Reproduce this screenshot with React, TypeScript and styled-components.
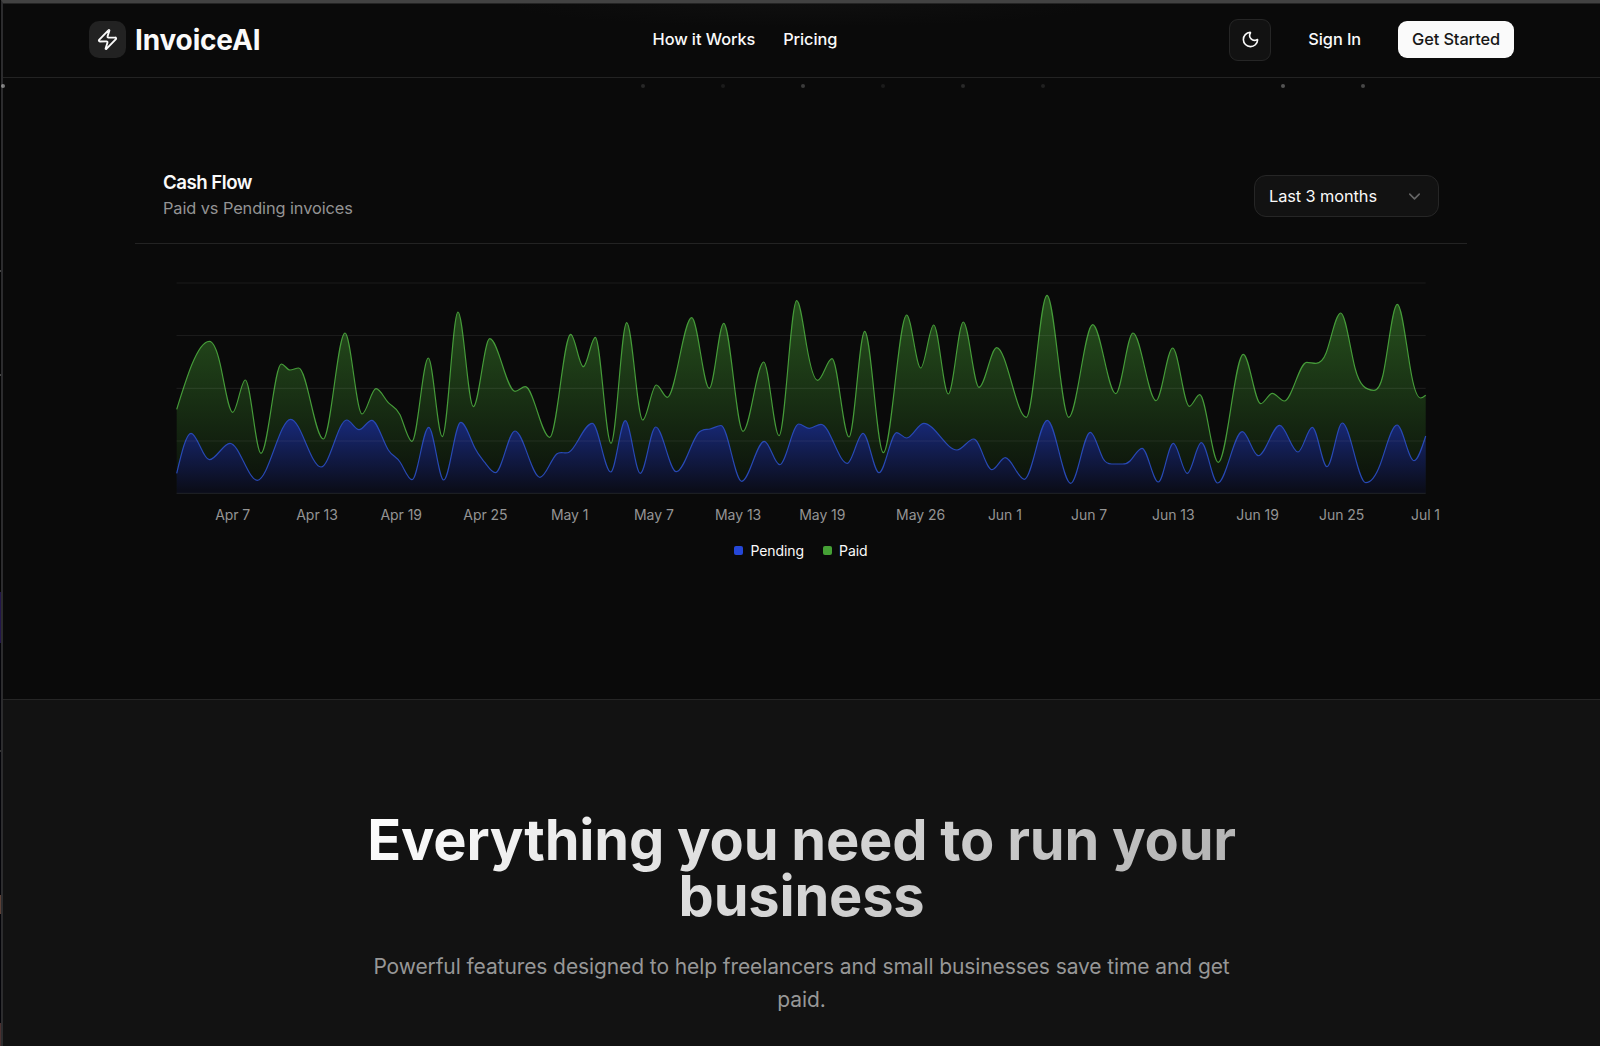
import React from "react";
import styled, { createGlobalStyle } from "styled-components";
import { Zap, Moon, ChevronDown } from "lucide-react";

const GlobalStyle = createGlobalStyle`
  *, *::before, *::after { box-sizing: border-box; }
  html, body { margin: 0; padding: 0; background: #0a0a0a; overflow: hidden; }
  body {
    font-family: Inter, "Noto Sans", sans-serif;
    color: #fafafa;
    -webkit-font-smoothing: antialiased;
  }
`;

const Window = styled.div`
  width: 1600px;
  height: 1046px;
  overflow: hidden;
  display: grid;
  grid-template-columns: 1px minmax(0, 1fr);
  background: #0a0a0a;
`;

/* Sliver of the window behind, visible along the left side */
const Backdrop = styled.div`
  background: linear-gradient(
    180deg,
    #030303 0 270px,
    #444444 270px 272px,
    #030303 272px 374px,
    #444444 374px 376px,
    #030303 376px 592px,
    #22154a 592px 643px,
    #030308 643px 750px,
    #333333 750px 752px,
    #030308 752px 895px,
    #5c4036 895px 914px,
    #030308 914px 1023px,
    #4b3030 1023px
  );
`;

const Page = styled.div`
  display: flex;
  flex-direction: column;
  border-left: 2px solid #2c2c2e;
  border-top: 3px solid #424242;
`;

const Header = styled.header`
  height: 75px;
  flex: none;
  border-bottom: 1px solid #232323;
  padding: 0 86px 1px;
  display: flex;
  justify-content: space-between;
  align-items: center;
  background: radial-gradient(ellipse 300px 24px at 800px 0, #0f0f0f, #0a0a0a);
  box-shadow: inset 0 1px #242424;
`;

const Brand = styled.a`
  display: flex;
  align-items: center;
  gap: 9px;
  font-size: 28px;
  font-weight: 700;
  letter-spacing: -0.16px;
`;

const BrandMark = styled.span`
  width: 37px;
  height: 37px;
  border-radius: 10px;
  background: #222222;
  display: grid;
  place-items: center;
`;

const Nav = styled.nav`
  display: flex;
  gap: 28px;
  padding-bottom: 2px;
`;

const NavLink = styled.a`
  font-size: 16.33px;
  font-weight: 500;
  line-height: 24px;
  letter-spacing: -0.08px;
`;

const Actions = styled.div`
  display: flex;
  align-items: center;
  justify-content: flex-end;
  gap: 23px;
`;

const ThemeToggle = styled.button`
  width: 42px;
  height: 42px;
  padding: 0;
  border: 1px solid #262626;
  border-radius: 9px;
  background: #121212;
  color: #fafafa;
  display: grid;
  place-items: center;
`;

const Button = styled.button<{ $primary?: boolean }>`
  height: 37px;
  padding: 0 14px 2px;
  border: 0;
  border-radius: 9px;
  font: 500 16.33px Inter, sans-serif;
  letter-spacing: -0.08px;
  background: ${(p) => (p.$primary ? "#fafafa" : "transparent")};
  color: ${(p) => (p.$primary ? "#171717" : "#fafafa")};
`;

const Hero = styled.section`
  height: 622px;
  flex: none;
  display: flex;
  flex-direction: column;
  border-bottom: 1px solid #262626;
`;

const DotRow = styled.div`
  height: 16px;
  flex: none;
  display: grid;
  grid-template-columns: repeat(20, 80px);
  align-items: center;
  margin-left: -2px;
`;

const Dot = styled.i<{ $level: number }>`
  width: 4px;
  height: 4px;
  border-radius: 50%;
  background: rgba(255, 255, 255, ${(p) => p.$level});
`;

const Card = styled.article`
  margin: 65px 133px 0 132px;
`;

const CardHeader = styled.div`
  height: 85px;
  padding: 0 28px;
  border-bottom: 1px solid #232323;
  display: flex;
  justify-content: space-between;
`;

const CardTitle = styled.h3`
  margin: 12px 0 0;
  font-size: 18.67px;
  font-weight: 600;
  line-height: 23px;
  letter-spacing: -0.5px;
`;

const CardText = styled.p`
  margin: 2px 0 0;
  font-size: 16.33px;
  line-height: 24px;
  letter-spacing: -0.08px;
  color: #949494;
`;

const Select = styled.button`
  width: 185px;
  height: 42px;
  margin-top: 16px;
  padding: 0 14px;
  border: 1px solid #262626;
  border-radius: 12px;
  background: #121212;
  color: #fafafa;
  font: 400 16.33px Inter, sans-serif;
  letter-spacing: -0.08px;
  display: flex;
  align-items: center;
  justify-content: space-between;
  svg { color: #666666; }
`;

const ChartSvg = styled.svg`
  display: block;
  width: 1332px;
  height: 292px;
  margin-top: 28px;
  text {
    font-family: Inter, sans-serif;
    font-size: 14px;
    letter-spacing: -0.05px;
    fill: #949494;
    text-anchor: middle;
  }
`;

const Legend = styled.div`
  display: flex;
  justify-content: center;
  gap: 19px;
  margin-top: -23px;
`;

const LegendItem = styled.span<{ $color: string }>`
  display: flex;
  align-items: center;
  gap: 7px;
  font-size: 14px;
  line-height: 19px;
  letter-spacing: -0.08px;
  &::before {
    content: "";
    width: 9px;
    height: 9px;
    border-radius: 2px;
    background: ${(p) => p.$color};
  }
`;

const Features = styled.section`
  flex: 1;
  background: #121212;
  padding: 112px 0 0;
  display: flex;
  flex-direction: column;
  align-items: center;
  text-align: center;
`;

const Headline = styled.h2`
  width: 896px;
  margin: 0;
  font-size: 56px;
  font-weight: 700;
  line-height: 56px;
  letter-spacing: -0.23px;
  background: linear-gradient(135deg, #ffffff, #adadad);
  background-clip: text;
  -webkit-background-clip: text;
  color: transparent;
`;

const Lead = styled.p`
  width: 896px;
  margin: 27px 0 0;
  font-size: 21px;
  line-height: 32.6px;
  letter-spacing: -0.095px;
  color: #979797;
`;

type Point = [number, number];

const paid: Point[] = [
  [176.7,409.3],[191.7,365],[209.3,341.3],[220,363.3],[232.7,412.3],[245.3,380],[261,453.3],
  [281.3,364],[290,370],[298.7,368],[323.3,439],[345,333],[362,414],[376,388.7],
  [388.3,402.7],[400,414.7],[412,441.3],[428.3,358],[442.3,436.7],[458,312],[473.3,406.7],[489.7,338.7],
  [515,391.3],[525.3,386.7],[549.7,437.3],[570.7,334.3],[583.3,366.7],
  [595.3,337.3],[611,443.3],[626.7,322.7],[642.7,420],[656.3,385],[667.3,397.3],[691.7,317.7],
  [709.3,388.3],[723.7,323.3],[743,431.3],[763.7,362],[779,435.7],[796.7,300.7],[806.7,346],[817.7,380.3],
  [832,358.7],[849,437],[864.7,331.3],[883.3,452.7],[906.7,315],[920.7,368],[933.7,325],
  [948.3,394],[963.3,322],[979,387.3],[996.7,347.7],[1026.3,417.3],[1047,295.3],
  [1068.7,417.3],[1092.7,324.7],[1115.7,393.7],[1133,333],
  [1156,400.7],[1172.7,348],[1189.3,406.3],[1199.7,394.7],[1218.3,462.3],
  [1243.3,354.3],[1260.7,403.7],[1272.3,393.3],[1284.3,401],[1306.7,362.3],
  [1316,363.3],[1326,353.3],[1340.7,313],[1355,368],[1363.3,386],[1374,390.3],[1383,375],
  [1397.3,304.3],[1411.7,376],[1420.7,398],[1425.7,395.3],
];

const pending: Point[] = [
  [176.7,473.3],[191,433.3],[209.3,459.7],[230,443.3],[257.3,480.3],[290.7,419.3],
  [321,467],[346.7,420],[359,429.7],[371.7,420.3],[388.3,450],[400,462],
  [412,479.7],[428.7,427.3],[443.7,480],[460.7,422.3],[475,448.3],[485,462.7],[495.3,472.7],[515,431],
  [540,477.3],[556.7,454],[569,452.3],[578.3,440],[592.3,423.3],[610.7,472],[625.3,420.7],
  [640.3,473.3],[655.7,427],[676.3,471.7],[698.3,433],[710,429],[721,425.5],
  [741.7,481.3],[764.3,441.3],[779.7,464.7],[798.7,424],[809.3,428.3],[821,424.3],
  [847.3,463.3],[863,433.3],[879,472.7],[896.7,432.7],[906.7,438],[923.7,423.3],
  [957,450],[973.7,439],[992,469.7],[1005.3,457.7],[1024.3,479.3],[1047.3,420.3],
  [1070.7,483.3],[1090.3,432.3],[1103,458.5],[1111.7,464],[1122.7,464],[1130,461],[1142,448.3],
  [1158.3,482],[1173.3,443.3],[1187.3,473.3],[1201.3,442.7],[1217.7,483],[1242.3,431.7],
  [1258.3,455.7],[1279.7,425.3],[1298,452],[1312.3,427.3],[1327,466.7],[1342.3,423],
  [1365.7,482.7],[1380,465],[1397,425],[1414,460.7],[1425.7,436],
];

/* Cubic spline, flat at peaks and valleys, with matched curvature at every other knot */
function curve(points: Point[]): string {
  const last = points.length - 1;
  const widths = points.slice(1).map((p, i) => p[0] - points[i][0]);
  const secants = points.slice(1).map((p, i) => (p[1] - points[i][1]) / widths[i]);
  const slopes = points.map(() => 0);
  for (let pass = 0; pass < 30; pass++) {
    slopes[0] = 1.5 * secants[0] - slopes[1] / 2;
    slopes[last] = 1.5 * secants[last - 1] - slopes[last - 1] / 2;
    for (let i = 1; i < last; i++) {
      const a = secants[i - 1];
      const b = secants[i];
      if (a * b <= 0) continue;
      const u = 1 / widths[i - 1];
      const v = 1 / widths[i];
      slopes[i] = (3 * (a * u + b * v) - slopes[i - 1] * u - slopes[i + 1] * v) / (2 * (u + v));
    }
  }
  let d = `M${points[0][0]},${points[0][1]}`;
  for (let i = 0; i < last; i++) {
    const [x0, y0] = points[i];
    const [x1, y1] = points[i + 1];
    const h = widths[i] / 3;
    d += `C${x0 + h},${y0 + slopes[i] * h} ${x1 - h},${y1 - slopes[i + 1] * h} ${x1},${y1}`;
  }
  return d;
}

const ticks: [string, number][] = [
  ["Apr 7", 232.7], ["Apr 13", 317], ["Apr 19", 401.2], ["Apr 25", 485.4], ["May 1", 569.7],
  ["May 7", 653.9], ["May 13", 738.1], ["May 19", 822.3], ["May 26", 920.6], ["Jun 1", 1004.9],
  ["Jun 7", 1089.1], ["Jun 13", 1173.3], ["Jun 19", 1257.5], ["Jun 25", 1341.7], ["Jul 1", 1425.5],
];

const gridLines = [283, 335.5, 388.3, 441, 493.4];

function Series({ id, points, color }: { id: string; points: Point[]; color: string }) {
  const line = curve(points);
  return (
    <g>
      <path d={`${line}V493.4H176.7Z`} fill={`url(#${id})`} />
      <path d={line} fill="none" stroke={color} strokeWidth={1.17} />
    </g>
  );
}

function CashFlowChart() {
  return (
    <ChartSvg viewBox="135 272 1332 292">
      <defs>
        <linearGradient id="paid" gradientUnits="userSpaceOnUse" x1="0" y1="295" x2="0" y2="493.4">
          <stop offset="0.05" stopColor="#26501d" />
          <stop offset="0.95" stopColor="#0c120b" />
        </linearGradient>
        <linearGradient id="pending" gradientUnits="userSpaceOnUse" x1="0" y1="419" x2="0" y2="493.4">
          <stop offset="0.05" stopColor="#172875" />
          <stop offset="0.95" stopColor="#0b0d1a" />
        </linearGradient>
      </defs>
      <Series id="paid" points={paid} color="#459b39" />
      <Series id="pending" points={pending} color="#2849b5" />
      {gridLines.map((y) => (
        <line key={y} x1="176.5" x2="1425.7" y1={y} y2={y} stroke="#ffffff" strokeOpacity="0.07" strokeWidth="1.17" />
      ))}
      {ticks.map(([label, x]) => (
        <text key={label} x={x} y={519.5}>{label}</text>
      ))}
    </ChartSvg>
  );
}

const dotLevels = [0.45, 0, 0, 0, 0, 0, 0, 0, 0.12, 0.07, 0.2, 0.07, 0.13, 0.09, 0, 0, 0.3, 0.25, 0, 0];

export default function App() {
  return (
    <>
      <GlobalStyle />
      <Window>
        <Backdrop />
        <Page>
          <Header>
            <Brand>
              <BrandMark><Zap size={23} strokeWidth={2} /></BrandMark>
              InvoiceAI
            </Brand>
            <Nav>
              <NavLink>How it Works</NavLink>
              <NavLink>Pricing</NavLink>
            </Nav>
            <Actions>
              <ThemeToggle><Moon size={19} strokeWidth={2} /></ThemeToggle>
              <Button>Sign In</Button>
              <Button $primary>Get Started</Button>
            </Actions>
          </Header>
          <Hero>
            <DotRow>
              {dotLevels.map((level, i) => <Dot key={i} $level={level} />)}
            </DotRow>
            <Card>
              <CardHeader>
                <div>
                  <CardTitle>Cash Flow</CardTitle>
                  <CardText>Paid vs Pending invoices</CardText>
                </div>
                <Select>
                  Last 3 months
                  <ChevronDown size={19} strokeWidth={2} />
                </Select>
              </CardHeader>
              <CashFlowChart />
              <Legend>
                <LegendItem $color="#2547d8">Pending</LegendItem>
                <LegendItem $color="#45a035">Paid</LegendItem>
              </Legend>
            </Card>
          </Hero>
          <Features>
            <Headline>Everything you need to run your business</Headline>
            <Lead>Powerful features designed to help freelancers and small businesses save time and get paid.</Lead>
          </Features>
        </Page>
      </Window>
    </>
  );
}
